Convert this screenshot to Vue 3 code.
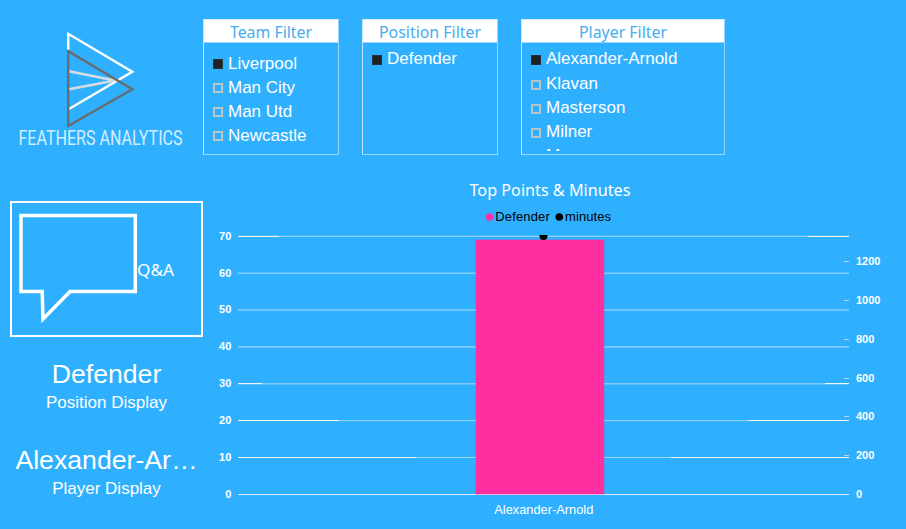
<script setup>
const filters = [
  { title: 'Team Filter', kind: 'team', len: 82, items: ['Liverpool', 'Man City', 'Man Utd', 'Newcastle'] },
  { title: 'Position Filter', kind: 'position', len: 102, items: ['Defender'] },
  { title: 'Player Filter', kind: 'player', len: 88, items: ['Alexander-Arnold', 'Klavan', 'Masterson', 'Milner', 'Moreno'] },
]
// Each grid line: label, pixel row, opacity, faint neighbouring row, length of the bright ends
const lines = [
  { v: 70, y: 236, o: 0.5, y2: 235, o2: 0.15, ends: 41 },
  { v: 60, y: 273, o: 0.45, y2: 272, o2: 0.22, ends: 0 },
  { v: 50, y: 309, o: 0.35, y2: 310, o2: 0.35, ends: 0 },
  { v: 40, y: 346, o: 0.45, y2: 347, o2: 0.28, ends: 0 },
  { v: 30, y: 383, o: 0.45, y2: 384, o2: 0.2, ends: 24 },
  { v: 20, y: 420, o: 0.5, y2: 421, o2: 0.04, ends: 101 },
  { v: 10, y: 457, o: 0.6, y2: 458, o2: 0, ends: 178 },
  { v: 0, y: 494, o: 0.9, y2: 495, o2: 0, ends: 0 },
]
const ticks = [
  { v: 1200, y: 261 }, { v: 1000, y: 300 }, { v: 800, y: 339 }, { v: 600, y: 378 },
  { v: 400, y: 416 }, { v: 200, y: 455 }, { v: 0, y: 494 },
]
</script>

<template>
  <main class="report">
    <header class="top">
      <svg class="logo" width="203" height="155" viewBox="0 0 203 155">
        <g fill="none" stroke-width="2.4">
          <path d="M68.2 50V33.8L132.3 71.8L69 109" stroke="#fff" />
          <path d="M69 71.2L115 80.5L69 89.3" stroke="#d8dbdf" />
          <path d="M68.2 51.2V126L132.3 89.2Z" stroke="#686c70" />
        </g>
        <text class="brand" x="18.5" y="144.5" textLength="164" lengthAdjust="spacingAndGlyphs">FEATHERS ANALYTICS</text>
      </svg>
      <section v-for="f in filters" :key="f.kind" class="filter" :class="f.kind">
        <h2>
          <svg :width="f.len" height="22"><text x="0" y="18" :textLength="f.len" lengthAdjust="spacingAndGlyphs">{{ f.title }}</text></svg>
        </h2>
        <ul>
          <li v-for="(item, i) in f.items" :key="item">
            <i class="box" :class="{ on: i === 0 }"></i><span>{{ item }}</span>
          </li>
        </ul>
      </section>
    </header>

    <div class="body">
      <aside>
        <div class="qa">
          <svg width="127" height="132" viewBox="12 203 127 132">
            <path d="M21 215.5H135.3V291.5H70L43 319L42.2 291.5H21Z" fill="none" stroke="#fff" stroke-width="3.5" />
          </svg>
          <svg class="qa-label" width="40" height="24"><text x="0" y="18" textLength="37" lengthAdjust="spacingAndGlyphs">Q&amp;A</text></svg>
        </div>
        <div class="card"><strong>Defender</strong><span>Position Display</span></div>
        <div class="card"><strong>Alexander-Ar…</strong><span>Player Display</span></div>
      </aside>

      <svg class="chart" width="703" height="374" viewBox="203 155 703 374">
        <text class="title" x="469.5" y="196" textLength="161" lengthAdjust="spacingAndGlyphs">Top Points &amp; Minutes</text>
        <circle cx="489.6" cy="217" r="3.8" fill="#ff2ea1" />
        <text class="legend" x="495.3" y="221" textLength="54.5">Defender</text>
        <circle cx="559.3" cy="217" r="3.8" fill="#000" />
        <text class="legend" x="565" y="221" textLength="46">minutes</text>

        <g v-for="l in lines" :key="l.v">
          <rect x="238" :y="l.y" width="611" height="1" fill="#eef1f4" :opacity="l.o" />
          <rect x="238" :y="l.y2" width="611" height="1" fill="#eef1f4" :opacity="l.o2" />
          <rect x="238" :y="l.y" :width="l.ends" height="1" fill="#f1f3f4" />
          <rect :x="849 - l.ends" :y="l.y" :width="l.ends" height="1" fill="#f1f3f4" />
          <text class="axis" x="231.3" :y="l.y + 4.3" text-anchor="end">{{ l.v }}</text>
        </g>
        <g v-for="t in ticks" :key="'r' + t.v">
          <rect v-if="t.v" x="844" :y="t.y" width="5" height="1" fill="#e3e9ee" opacity=".7" />
          <text class="axis" x="856" :y="t.y + 4.3">{{ t.v }}</text>
        </g>
        <rect x="475.7" y="239.7" width="128.5" height="254.6" fill="#ff2ea1" />
        <path d="M539.5 235H547.5V236A4 4 0 0 1 539.5 236Z" fill="#000" />
        <text class="name" x="494.3" y="514" textLength="99" lengthAdjust="spacingAndGlyphs">Alexander-Arnold</text>
      </svg>
    </div>
  </main>
</template>

<style>
body { margin: 0; background: #2fb0ff; }
</style>
<style scoped>
.report {
  box-sizing: border-box;
  width: 906px;
  height: 529px;
  overflow: hidden;
  background: #2fb0ff;
  color: #fff;
  font-family: "Liberation Sans", Arial, sans-serif;
}
svg { display: block; flex: none; overflow: visible; }
.top { display: flex; height: 155px; }
.brand { font: 400 19.5px Roboto, sans-serif; fill: #d3edff; }
.filter {
  box-sizing: border-box;
  width: 136px;
  height: 136px;
  margin: 19px 23px 0 0;
  border: 1px solid #97d7ff;
  border-left-color: #bfe6ff;
  border-top-color: #d5efff;
}
.filter.player { width: 204px; margin-right: 0; }
h2 {
  display: flex;
  justify-content: center;
  height: 22px;
  margin: 0;
  border-bottom: 1px solid #97d7ff;
  background: #fff;
}
h2 text { font: 400 17px "Noto Sans", sans-serif; fill: #45adf0; }
ul {
  height: 108px;
  margin: 0;
  padding: 9px 0 0 9px;
  box-sizing: border-box;
  overflow: hidden;
  list-style: none;
}
.position ul, .player ul { padding-top: 4px; }
li { display: flex; align-items: center; height: 24px; font-size: 17px; line-height: 24px; }
.position li:first-child, .player li:first-child { height: 24.5px; }
.box {
  box-sizing: border-box;
  width: 10px;
  height: 10px;
  margin: 2px 5px 0 0;
  border: 2px solid #b9c3ca;
}
.team .box { margin-top: 0; }
.box.on { background: #212121; border: 1px solid #24323c; }
.body { display: flex; }
aside { width: 193px; padding: 46px 0 0 10px; }
.qa {
  display: flex;
  box-sizing: border-box;
  width: 193px;
  height: 136px;
  border: 2px solid #fff;
}
.qa svg:first-child { margin-right: -2px; }
.qa-label { margin-top: 55px; }
.qa-label text { font: 400 17px "Noto Sans", sans-serif; fill: #fff; }
.card { display: flex; flex-direction: column; align-items: center; padding-top: 21px; height: 65px; }
.card strong { font-weight: 400; font-size: 26.67px; line-height: 32px; white-space: nowrap; }
.card span { font-size: 17px; line-height: 26px; }
.title { font: 400 17px "Noto Sans", sans-serif; fill: #fff; }
.legend { font-size: 13px; fill: #000; }
.axis { font-size: 11px; font-weight: 700; fill: #fff; }
.name { font-size: 13px; fill: #fff; }
</style>
